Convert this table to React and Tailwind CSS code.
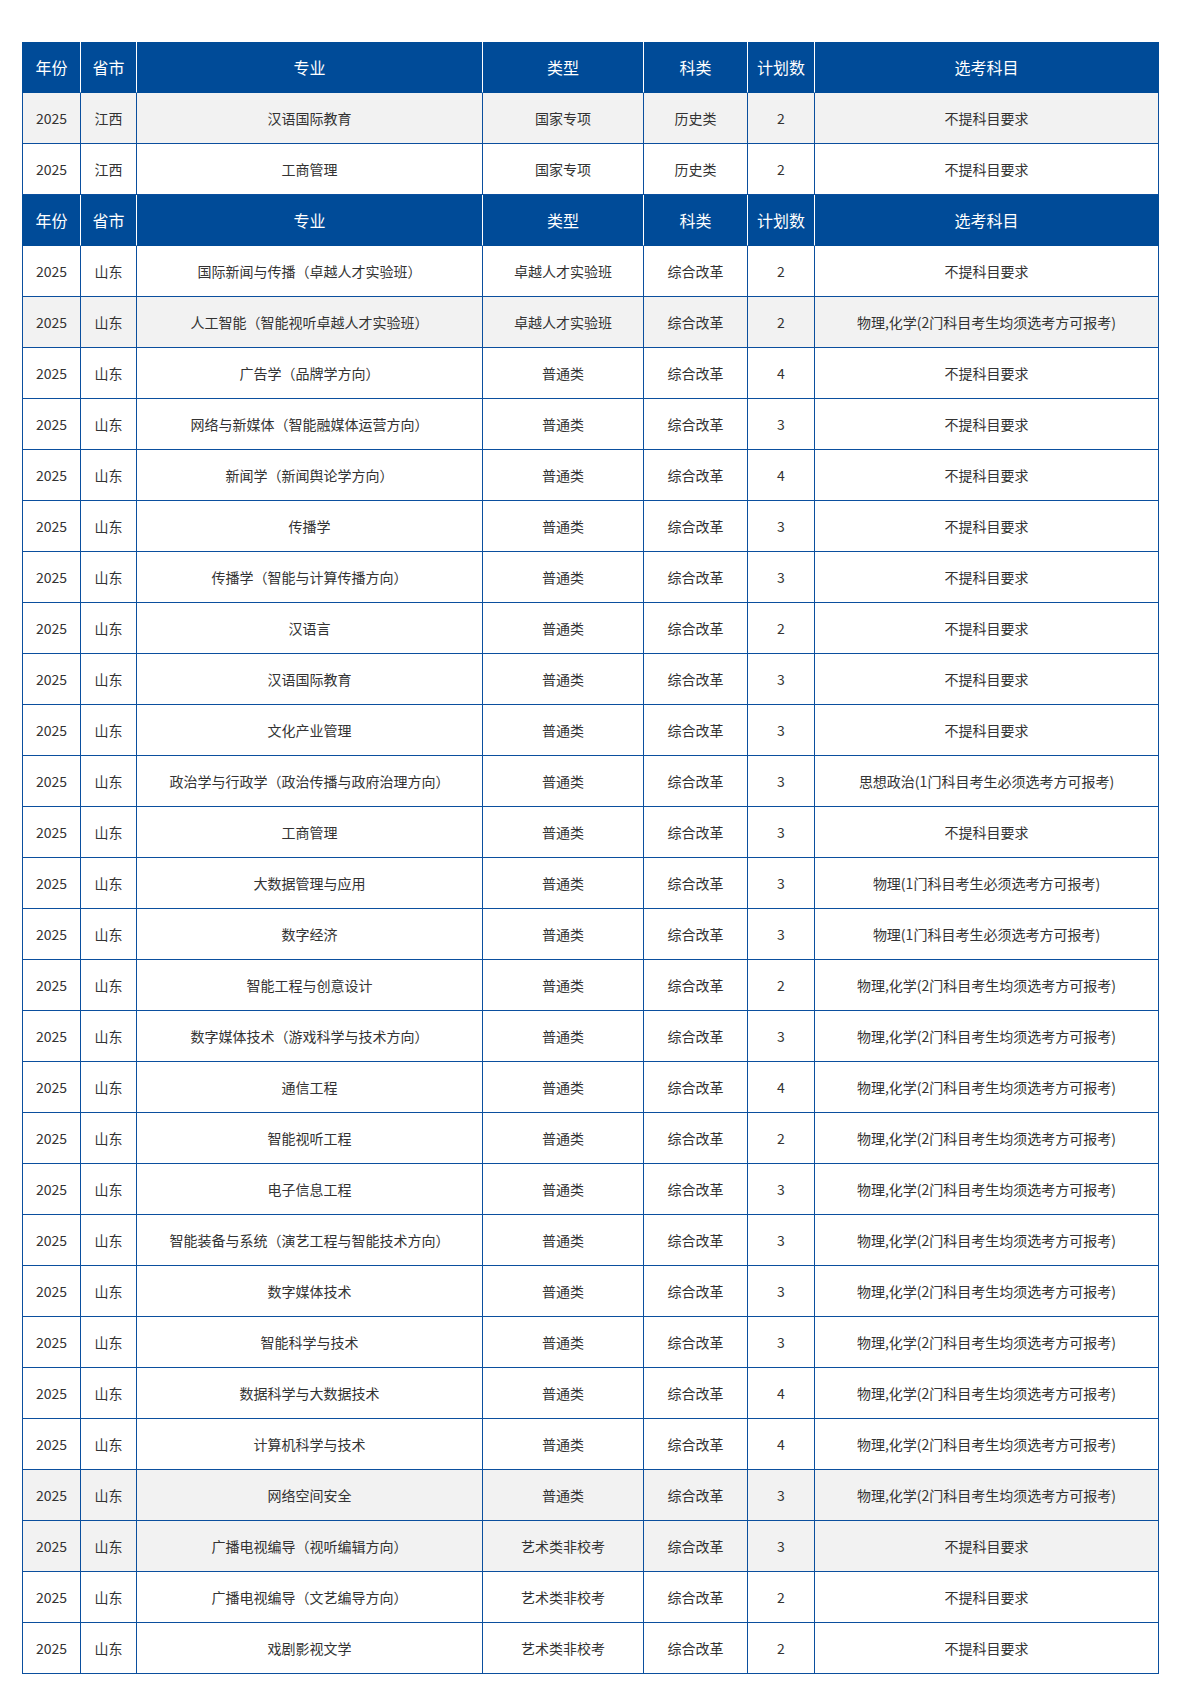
import React from "react";

const HEAD = ["年份", "省市", "专业", "类型", "科类", "计划数", "选考科目"];
const WIDTHS = ["w-[59px] border-l", "w-[56px]", "w-[346px]", "w-[161px]", "w-[104px]", "w-[67px]", "w-[344px]"];

const N = "不提科目要求";
const PC = "物理,化学(2门科目考生均须选考方可报考)";
const P1 = "物理(1门科目考生必须选考方可报考)";

const jx = [
  ["汉语国际教育", "国家专项", "历史类", "2", N, true],
  ["工商管理", "国家专项", "历史类", "2", N, false],
];

const sd = [
  ["国际新闻与传播（卓越人才实验班）", "卓越人才实验班", "2", N],
  ["人工智能（智能视听卓越人才实验班）", "卓越人才实验班", "2", PC, true],
  ["广告学（品牌学方向）", "普通类", "4", N],
  ["网络与新媒体（智能融媒体运营方向）", "普通类", "3", N],
  ["新闻学（新闻舆论学方向）", "普通类", "4", N],
  ["传播学", "普通类", "3", N],
  ["传播学（智能与计算传播方向）", "普通类", "3", N],
  ["汉语言", "普通类", "2", N],
  ["汉语国际教育", "普通类", "3", N],
  ["文化产业管理", "普通类", "3", N],
  ["政治学与行政学（政治传播与政府治理方向）", "普通类", "3", "思想政治(1门科目考生必须选考方可报考)"],
  ["工商管理", "普通类", "3", N],
  ["大数据管理与应用", "普通类", "3", P1],
  ["数字经济", "普通类", "3", P1],
  ["智能工程与创意设计", "普通类", "2", PC],
  ["数字媒体技术（游戏科学与技术方向）", "普通类", "3", PC],
  ["通信工程", "普通类", "4", PC],
  ["智能视听工程", "普通类", "2", PC],
  ["电子信息工程", "普通类", "3", PC],
  ["智能装备与系统（演艺工程与智能技术方向）", "普通类", "3", PC],
  ["数字媒体技术", "普通类", "3", PC],
  ["智能科学与技术", "普通类", "3", PC],
  ["数据科学与大数据技术", "普通类", "4", PC],
  ["计算机科学与技术", "普通类", "4", PC],
  ["网络空间安全", "普通类", "3", PC, true],
  ["广播电视编导（视听编辑方向）", "艺术类非校考", "3", N, true],
  ["广播电视编导（文艺编导方向）", "艺术类非校考", "2", N],
  ["戏剧影视文学", "艺术类非校考", "2", N],
];

function HeaderRow() {
  return (
    <div className="flex">
      {HEAD.map((h, i) => (
        <div
          key={i}
          className={`${WIDTHS[i]} h-[51px] shrink-0 flex items-center justify-center bg-[#004b98] text-white text-[16px] ${
            i === 0 ? "border-l-[#004b98]" : ""
          } border-b border-b-[#004b98] border-r ${i === 6 ? "border-r-[#004b98]" : "border-r-white"}`}
        >
          {h}
        </div>
      ))}
    </div>
  );
}

function BodyRow({ cells, grey }) {
  return (
    <div className={`flex ${grey ? "bg-[#f2f2f2]" : "bg-white"}`}>
      {cells.map((c, i) => (
        <div
          key={i}
          className={`${WIDTHS[i]} h-[51px] shrink-0 flex items-center justify-center text-[14px] text-[#333333] border-[#0b4f9e] border-r border-b`}
        >
          {c}
        </div>
      ))}
    </div>
  );
}

export default function App() {
  return (
    <div
      className="w-[1190px] min-h-[1683px] bg-white pt-[42px] pl-[22px]"
      style={{ fontFamily: '"Noto Sans CJK SC", "Microsoft YaHei", sans-serif' }}
    >
      <div className="flex flex-col w-[1137px]">
        <HeaderRow />
        {jx.map((r, i) => (
          <BodyRow key={"j" + i} cells={["2025", "江西", r[0], r[1], r[2], r[3], r[4]]} grey={r[5]} />
        ))}
        <HeaderRow />
        {sd.map((r, i) => (
          <BodyRow key={"s" + i} cells={["2025", "山东", r[0], r[1], "综合改革", r[2], r[3]]} grey={r[4]} />
        ))}
      </div>
    </div>
  );
}
